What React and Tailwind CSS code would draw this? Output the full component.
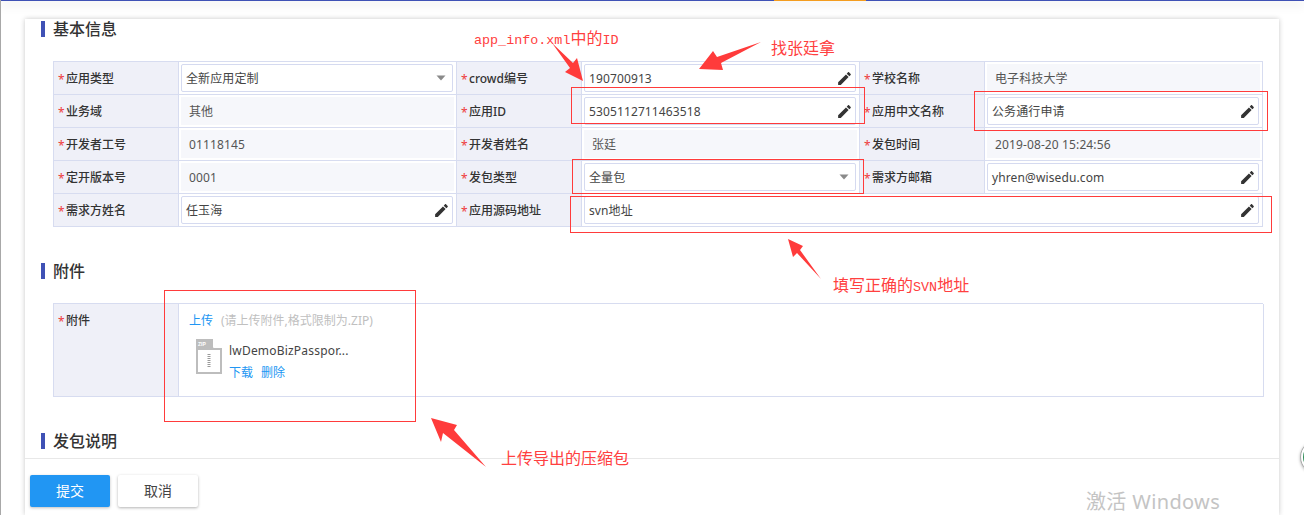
function Pencil() {
  return (
    <svg width="17" height="17" viewBox="0 0 24 24" fill="#333" className="shrink-0">
      <path d="M3 17.25V21h3.75L17.81 9.94l-3.75-3.75L3 17.25zM20.71 7.04c.39-.39.39-1.02 0-1.41l-2.34-2.34c-.39-.39-1.02-.39-1.41 0l-1.83 1.83 3.75 3.75 1.83-1.83z" />
    </svg>
  );
}
function Caret() {
  return (
    <svg width="10" height="6" viewBox="0 0 10 6" fill="#8a8a8a" className="shrink-0 mr-[4px]">
      <path d="M0.5 0.5h9L5 5.5z" />
    </svg>
  );
}
function Label({ children, tall }) {
  return (
    <div className={"flex border-r border-b border-[#d7dcf0] bg-[#eff0f8] pl-[4px] text-[#333] font-medium " + (tall ? "items-start pt-[8px]" : "items-center pt-[1px]")}>
      <span className="w-[8px] text-[#ee3b3b] font-normal text-left relative top-[1px]">*</span>
      {children}
    </div>
  );
}
function Value({ kind, span, children }) {
  const inner =
    kind === "read" ? (
      <div className="h-full bg-[#f6f7fb] pl-[8px] pt-[1px] flex items-center text-[#555] tracking-[0.12px]">{children}</div>
    ) : (
      <div className="h-full mr-[1px] bg-white border border-[#d5daf0] rounded-[2px] pl-[4px] pr-[2px] flex items-center justify-between text-[#444] tracking-[0.12px]">
        <span className="pt-[1px]">{children}</span>
        {kind === "select" ? <Caret /> : <Pencil />}
      </div>
    );
  return (
    <div className={"border-r border-b border-[#d7dcf0] p-[2px] min-w-0 " + (span ? "col-span-3" : "")}>{inner}</div>
  );
}
function Title({ children, className }) {
  return (
    <div className={"flex items-center h-[16px] text-[16px] font-medium text-[#333] " + className}>
      <span className="w-[4px] h-[16px] bg-[#3f51b5] mr-[8px]" />
      {children}
    </div>
  );
}
function ZipIcon() {
  return (
    <svg width="26" height="35" viewBox="0 0 26 35" className="shrink-0">
      <path d="M0 0h17l9 9v26H0z" fill="#bdbdbd" />
      <path d="M18 0l8 8h-8z" fill="#fff" />
      <path d="M17.5 0v8.5H26" fill="none" stroke="#fff" strokeWidth="1" />
      <rect x="2" y="11" width="22" height="22" fill="#fff" />
      <path d="M13 15v14" stroke="#9a9a9a" strokeWidth="3" strokeDasharray="1 1" />
      <text x="2" y="6.5" fontSize="5" fontWeight="700" fill="#fff" fontFamily="Liberation Sans">ZIP</text>
    </svg>
  );
}
const cols = "grid grid-cols-[125px_278px_125px_278px_125px_278px] auto-rows-[33px] border-t border-l border-[#d7dcf0] text-[12px]";
export default function App() {
  return (
    <div className="relative w-[1304px] h-[515px] overflow-hidden bg-white border-l border-[#a8a8a8] flex flex-col" style={{ fontFamily: '"Noto Sans","Noto Sans CJK SC",sans-serif' }}>
      <div className="flex h-[1px] shrink-0 bg-[#3f51b5] shadow-[0_3px_10px_rgba(0,0,0,0.35)] z-10">
        <div className="w-[773px]" />
        <div className="w-[92px] bg-[#f39c1f]" />
      </div>
      <div className="flex-1 min-h-0 pt-[18px] pl-[24px] pr-[24px]">
        <div className="w-[1254px] h-full bg-white shadow-[0_0_5px_rgba(0,0,0,0.22)] flex flex-col">
          <div className="flex-1 min-h-0 overflow-hidden pt-[2px] pl-[16px]">
            <Title className="mb-[24px]">基本信息</Title>
            <div className="ml-[12px] w-[1210px]">
              <div className={cols}>
                <Label>应用类型</Label><Value kind="select">全新应用定制</Value>
                <Label>crowd编号</Label><Value kind="edit">190700913</Value>
                <Label>学校名称</Label><Value kind="read">电子科技大学</Value>
                <Label>业务域</Label><Value kind="read">其他</Value>
                <Label>应用ID</Label><Value kind="edit">5305112711463518</Value>
                <Label>应用中文名称</Label><Value kind="edit">公务通行申请</Value>
                <Label>开发者工号</Label><Value kind="read">01118145</Value>
                <Label>开发者姓名</Label><Value kind="read">张廷</Value>
                <Label>发包时间</Label><Value kind="read">2019-08-20 15:24:56</Value>
                <Label>定开版本号</Label><Value kind="read">0001</Value>
                <Label>发包类型</Label><Value kind="select">全量包</Value>
                <Label>需求方邮箱</Label><Value kind="edit">yhren@wisedu.com</Value>
                <Label>需求方姓名</Label><Value kind="edit">任玉海</Value>
                <Label>应用源码地址</Label><Value kind="edit" span>svn地址</Value>
              </div>
            </div>
            <Title className="mt-[36px] mb-[24px]">附件</Title>
            <div className="ml-[12px] w-[1210px]">
              <div className="grid grid-cols-[125px_1085px] h-[94px] border-t border-l border-[#d7dcf0] text-[12px]">
                <Label tall>附件</Label>
                <div className="border-r border-b border-[#d7dcf0] pl-[10px] pt-[9px]">
                  <div className="flex gap-[8px] h-[16px] items-center">
                    <span className="text-[#2196f3]">上传</span>
                    <span className="text-[#c0c0c0]">(请上传附件,格式限制为.ZIP)</span>
                  </div>
                  <div className="flex mt-[10px] ml-[7px] gap-[7px]">
                    <ZipIcon />
                    <div className="flex flex-col">
                      <span className="text-[#444] leading-[16px] mt-[4px] tracking-[0.2px]">lwDemoBizPasspor...</span>
                      <div className="flex gap-[8px] text-[#2196f3] leading-[16px] mt-[6px]">
                        <span>下载</span><span>删除</span>
                      </div>
                    </div>
                  </div>
                </div>
              </div>
            </div>
            <Title className="mt-[36px]">发包说明</Title>
          </div>
          <div className="h-[57px] shrink-0 border-t border-[#e8e8e8] flex gap-[8px] pl-[5px] pt-[16px] bg-white text-[14px]">
            <button className="w-[80px] h-[32px] pb-[1px] rounded-[2px] bg-[#2196f3] text-white shadow-[0_1px_3px_rgba(0,0,0,0.25)]">提交</button>
            <button className="w-[80px] h-[32px] pb-[1px] rounded-[2px] bg-white text-[#444] shadow-[0_1px_3px_rgba(0,0,0,0.3)]">取消</button>
          </div>
        </div>
      </div>

      <span className="absolute left-[1085px] top-[488px] text-[20px] leading-[28px] text-[#c4c4c4] tracking-[0.35px]">激活 Windows</span>
      <div className="absolute left-[1299px] top-[440px] w-[34px] h-[34px] rounded-full border border-[#aaaaaa] bg-white p-[2px] shadow-[0_1px_3px_rgba(0,0,0,0.3)]">
        <div className="w-full h-full rounded-full bg-[#2e8b57]" />
      </div>

      {/* annotations */}
      <div className="absolute left-[570px] top-[87px] w-[294px] h-[37px] border border-[#ff3b3b]" />
      <div className="absolute left-[973px] top-[91px] w-[294px] h-[40px] border border-[#ff3b3b]" />
      <div className="absolute left-[571px] top-[159px] w-[292px] h-[35px] border border-[#ff3b3b]" />
      <div className="absolute left-[569px] top-[196px] w-[702px] h-[37px] border border-[#ff3b3b]" />
      <div className="absolute left-[163px] top-[290px] w-[252px] h-[132px] border border-[#ff3b3b]" />
      <svg className="absolute left-0 top-0 pointer-events-none" width="1304" height="515" viewBox="1 0 1304 515" fill="#ff3b3b">
        <polygon points="552,43 573,63 577,58 583,81 565,72 570,68" />
        <polygon points="761,42 717,57 713,51 699,69 723,70 721,63" />
        <polygon points="788,239 803,246 800,250 821,279 797,253 793,257" />
        <polygon points="431,418 457,425 454,430 486,467 443,433 441,442" />
      </svg>
      <span className="absolute left-[473px] top-[31px] text-[#ff4040] leading-[18px] text-[16px]" style={{ fontFamily: '"Liberation Mono","Noto Sans CJK SC",monospace' }}><span className="text-[13.4px]">app_info.xml</span>中的<span className="text-[13.4px]">ID</span></span>
      <span className="absolute left-[770px] top-[38px] text-[#ff4040] text-[16px] leading-[18px]" style={{ fontFamily: '"Noto Sans CJK SC",sans-serif' }}>找张廷拿</span>
      <span className="absolute left-[832px] top-[278px] text-[#ff4040] text-[16px] leading-[18px]" style={{ fontFamily: '"Liberation Mono","Noto Sans CJK SC",monospace' }}>填写正确的<span className="text-[13.4px]">SVN</span>地址</span>
      <span className="absolute left-[500px] top-[448px] text-[#ff4040] text-[16px] leading-[18px]" style={{ fontFamily: '"Noto Sans CJK SC",sans-serif' }}>上传导出的压缩包</span>
    </div>
  );
}
